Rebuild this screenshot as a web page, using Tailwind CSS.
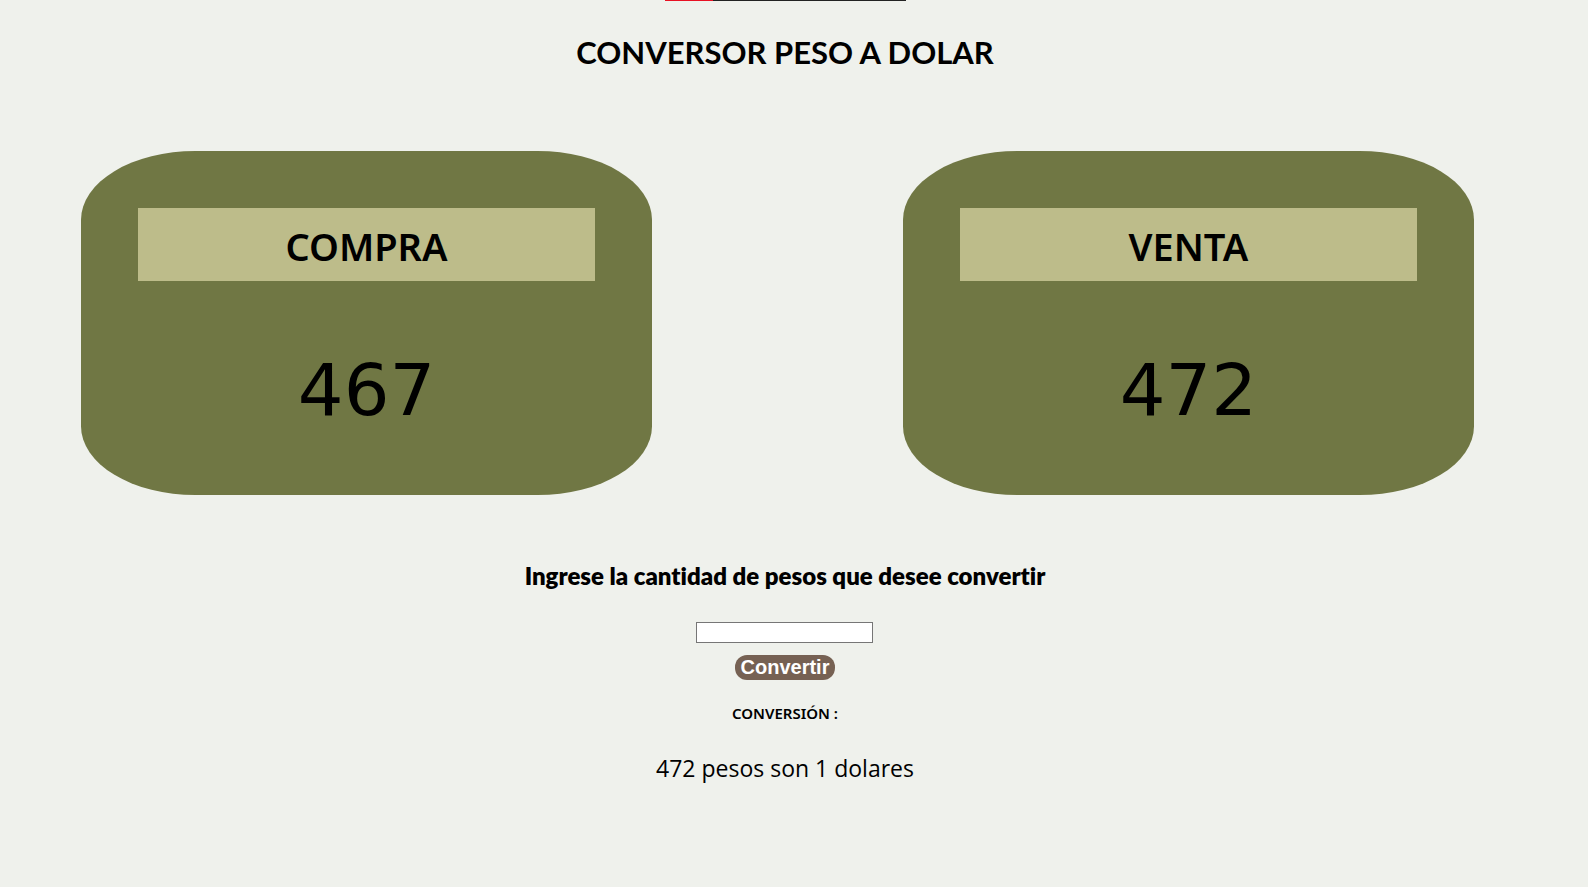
<!DOCTYPE html>
<html lang="es">
<head>
<meta charset="utf-8">
<title>Conversor peso a dolar</title>
<script src="https://cdn.jsdelivr.net/npm/@tailwindcss/browser@4"></script>
</head>
<body class="relative min-h-screen bg-[#eff1ec] pr-[18px] text-black">
  <div class="absolute left-[665px] top-0 flex h-px w-[241px] bg-[#222222]"><div class="h-px w-1/5 bg-[#e81123]"></div></div>
  <main class="flex flex-col items-center text-center font-['Lato',sans-serif]">
    <h1 class="mt-8 text-[31px] leading-10 font-bold">CONVERSOR PESO A DOLAR</h1>
    <section class="mt-[79px] flex w-full justify-between pr-24 pl-[81px]">
      <article class="flex h-[344px] w-[41%] flex-col items-center rounded-[20%] bg-[#707744] pt-[57px]">
        <h2 class="h-[73px] w-4/5 bg-[#bdbc8a] pt-0.5 font-['Noto_Sans',sans-serif] text-[38px] leading-[73px] font-semibold">COMPRA</h2>
        <p class="mt-16 font-['DejaVu_Sans',sans-serif] text-[72px] leading-[90px]">467</p>
      </article>
      <article class="flex h-[344px] w-[41%] flex-col items-center rounded-[20%] bg-[#707744] pt-[57px]">
        <h2 class="h-[73px] w-4/5 bg-[#bdbc8a] pt-0.5 font-['Noto_Sans',sans-serif] text-[38px] leading-[73px] font-semibold">VENTA</h2>
        <p class="mt-16 font-['DejaVu_Sans',sans-serif] text-[72px] leading-[90px]">472</p>
      </article>
    </section>
    <form class="mt-[65px] flex flex-col items-center" onsubmit="return false">
      <label for="pesos" class="text-[24px] leading-8 font-extrabold [font-variant-ligatures:none]">Ingrese la cantidad de pesos que desee convertir</label>
      <input id="pesos" type="text" class="mt-[30px] h-[21px] w-[177px] border border-[#767676] bg-white px-1 text-[13px]">
      <button type="submit" class="mt-3 h-[25px] rounded-[12px] bg-[#766153] px-[6px] font-['Liberation_Sans',sans-serif] text-[20px] leading-[25px] font-bold text-white">Convertir</button>
    </form>
    <h3 class="mt-6 font-['Noto_Sans',sans-serif] text-[15px] leading-[18px] font-semibold">CONVERSIÓN :</h3>
    <p class="mt-[30px] font-['Open_Sans',sans-serif] text-[23px] leading-8">472 pesos son 1 dolares</p>
  </main>
</body>
</html>
